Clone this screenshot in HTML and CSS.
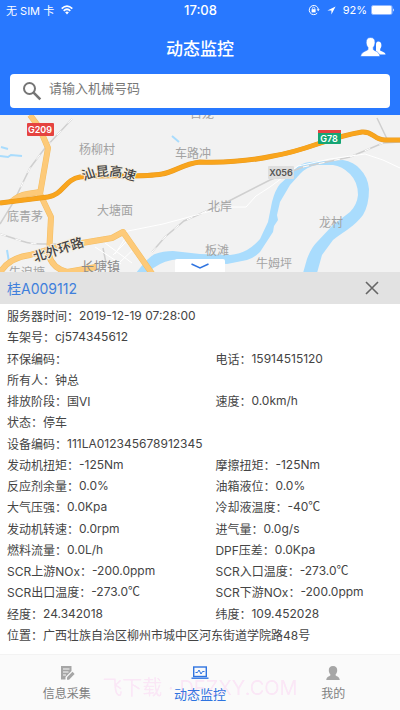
FILE: index.html
```html
<!DOCTYPE html>
<html lang="zh-CN">
<head>
    <meta charset="UTF-8">
    <meta name="viewport" content="width=device-width, initial-scale=1.0">
    <title>动态监控</title>
    <link rel="stylesheet" href="styles.css">
</head>
<body>
    <header class="header">
        <div class="status-bar">
            <div class="status-side">
                <span>无 SIM 卡</span>
                <svg width="12" height="10" viewBox="0 0 12 10" fill="none" stroke="#fff" stroke-width="1.7">
                    <path d="M0.7 3.6 Q6 -1.4 11.3 3.6"/>
                    <path d="M2.7 5.8 Q6 2.7 9.3 5.8"/>
                    <path d="M4.1 7.3 Q6 5.6 7.9 7.3 L6 9.4z" fill="#fff" stroke="none"/>
                </svg>
            </div>
            <span class="clock">17:08</span>
            <div class="status-side status-right">
                <svg width="12" height="12" viewBox="0 0 12 12" fill="none" stroke="#fff" stroke-width="1">
                    <path d="M9.2 9.2 A4.6 4.6 0 1 1 10.4 5.4"/>
                    <path d="M8.7 5.2 h3 l-1.5 2z" fill="#fff" stroke="none"/>
                    <rect x="3.6" y="5.2" width="4" height="3.2" fill="#fff" stroke="none"/>
                    <path d="M4.4 5.4 V4.4 a1.2 1.2 0 0 1 2.4 0 V5.4" stroke-width="0.8"/>
                </svg>
                <svg class="locate" width="9" height="9" viewBox="0 0 9 9"><path d="M8.6 0.4 L0.4 4.6 H4.4 V8.6z" fill="#fff"/></svg>
                <span>92%</span>
                <svg width="24" height="10" viewBox="0 0 24 10" fill="#fff">
                    <rect x="0.5" y="0.5" width="20.500" height="9" rx="1.5" fill="none" stroke="#a9c6ff" stroke-width="0.8"/>
                    <rect x="1" y="1" width="19.500" height="8" rx="1"/>
                    <path d="M22 3.2 q1.8 1.8 0 3.6z"/>
                </svg>
            </div>
        </div>
        <div class="title-bar">
            <h1>动态监控</h1>
            <button class="contacts" type="button" aria-label="联系人">
                <svg width="26" height="20" viewBox="0 0 26 20" fill="#fff">
                    <path d="M18.200 4.500 c2.200 0 3.300 1.500 3.200 3.700 c0 1.700-.5 2.700-1.200 3.600 v1.500 c0 1.100 5 1.300 5.400 4.300 H16 V8 c0-2.200.6-3.500 2.200-3.500z"/>
                    <path d="M10.600 0.500 c3 0 4.600 2 4.400 4.900 c0 2.200-.7 3.800-1.700 4.900 v2 c0 1.600 6 1.600 6.700 7.200 H0.600 c.5-5.400 7.400-5.600 7.400-7.200 v-2 C6.900 9.200 6.200 7.600 6.200 5.400 C6 2.500 7.600 .5 10.600 .5z" stroke="#2878ff" stroke-width="0.6"/>
                </svg>
            </button>
        </div>
        <form class="search">
            <svg width="20" height="20" viewBox="0 0 20 20" fill="none" stroke="#757575" stroke-width="2">
                <circle cx="7.5" cy="7.5" r="5.5"/>
                <path d="M11.6 11.6 L18.3 18.3" stroke-width="2.6"/>
            </svg>
            <input type="search" placeholder="请输入机械号码" aria-label="请输入机械号码">
        </form>
    </header>

    <main class="main">
        <section class="map-wrap">
            <svg class="map" viewBox="0 0 400 157" preserveAspectRatio="xMidYMid slice">
                <rect width="400" height="157" fill="#f2f2f2"/>

                <!-- rivers -->
                <path d="M0 41 L8 42 L11 40 L22 41 M1 32 L8 34 M172 21 L179 27 M7 135 L9 147" fill="none" stroke="#a9dcfd" stroke-width="2"/>
                <path d="M136 158 Q148 142 155 139 Q163 136 173 136 L200 139 L230 140 Q240 139 247 135 Q255 130 260 124 L268 107 L272 87 Q275 75 280 69 L290 60 L295 54 Q301 48 310 47 L343 45 Q354 47 360 54 Q368 62 369 74 Q369 90 363 100 Q357 108 347 115 Q338 121 333 125 L322 140 L317 158 H303 L307 144 Q311 133 317 127 L333 110 L350 97 Q357 90 358 80 Q358 67 350 59 Q342 51 333 50 L317 50 Q306 52 300 59 L290 70 L280 87 L277 100 L278 105 L274 111 L273 117 L260 137 Q254 143 247 145 L227 149 L200 147 Q185 143 172 145 Q157 148 148 158z" fill="#a9dcfd"/>

                <!-- railways -->
                <g fill="none" stroke="#cfcfcf" stroke-width="1.5">
                    <path d="M72 4 L45 33 L30 53 L13 88 L0 109"/>
                    <path d="M0 119 C18 124 24 129 42 129 H83"/>
                    <path d="M152 137 L165 122 L184 106 L227 87 L270 65 L303 52 L350 42 L383 28 L400 27"/>
                    <path d="M377 3 L388 26 M103 133 L106 148"/>
                </g>
                <g fill="none" stroke="#fff">
                    <path d="M72 4 L45 33 L30 53 L13 88 M0 119 C18 124 24 129 42 129 H83 M152 137 L165 122 L184 106 L227 87 M303 52 L350 42 L383 28" stroke-dasharray="6 10"/>
                    <path d="M123 117 L163 109 L200 99 L225 92 H246 L256 81 L270 72 L298 51 L330 44 L365 39 L383 45 L400 53"/>
                    <path d="M95 132 L121 149 M105 128 L132 148 M113 140 L127 126 M120 147 L137 131 M128 119 L115 139"/>
                </g>

                <!-- roads -->
                <g fill="none" stroke-linejoin="round">
                    <g stroke="#f3bd62" stroke-width="6">
                        <path d="M30 0 L39 12 L48 33 L40 79 L51 102 L49 140 Q52 153 67 157"/>
                        <path d="M11 87 Q19 80 27 79 L40 77"/>
                        <path d="M0 158 Q8 143 30 140 L50 134 L82 128 L112 123 L123 117 L153 160 M67 157 L96 152"/>
                    </g>
                    <g stroke="#fdca79" stroke-width="5">
                        <path d="M30 0 L39 12 L48 33 L40 79 L51 102 L49 140 Q52 153 67 157"/>
                        <path d="M11 87 Q19 80 27 79 L40 77"/>
                        <path d="M0 158 Q8 143 30 140 L50 134 L82 128 L112 123 L123 117 L153 160 M67 157 L96 152"/>
                    </g>
                    <path d="M0 88 L48 82 C63 80 65 64 80 62 C100 59 140 63 162 59 C175 57 182 49 200 47 C230 48 250 46 273 41 C310 35 325 23 362 17 C373 16 374 25 385 25 H400" stroke="#e89a20" stroke-width="5"/>
                    <path d="M0 88 L48 82 C63 80 65 64 80 62 C100 59 140 63 162 59 C175 57 182 49 200 47 C230 48 250 46 273 41 C310 35 325 23 362 17 C373 16 374 25 385 25 H400" stroke="#f9a51d" stroke-width="4"/>
                </g>

                <!-- place names -->
                <g class="place">
                    <text x="79" y="39">杨柳村</text>
                    <text x="175" y="43">车路冲</text>
                    <text x="190" y="3">古龙</text>
                    <text x="97" y="100">大塘面</text>
                    <text x="7" y="106">底青茅</text>
                    <text x="208" y="96">北岸</text>
                    <text x="319" y="112">龙村</text>
                    <text x="205" y="140">板滩</text>
                    <text x="256" y="153">牛姆坪</text>
                    <text x="9" y="162">牛浪塘</text>
                    <text class="town" x="81" y="156">长塘镇</text>
                </g>
                <g class="road-name">
                    <path id="road1" d="M84 66 C98 59 115 59 137 67" fill="none"/>
                    <path id="road2" d="M35 147 L85 131" fill="none"/>
                    <text><textPath href="#road1">汕昆高速</textPath></text>
                    <text><textPath href="#road2">北外环路</textPath></text>
                </g>

                <!-- road numbers -->
                <rect x="27" y="8" width="27" height="13" rx="1" fill="#e54340"/>
                <text class="badge" x="40" y="18">G209</text>
                <rect x="318" y="15" width="23" height="14" rx="1" fill="#16a574"/>
                <rect x="318" y="15" width="23" height="3" fill="#e54340"/>
                <text class="badge" x="329" y="27">G78</text>
                <rect x="268" y="51" width="26" height="13" rx="1" fill="#dedede"/>
                <text class="badge badge-dark" x="281" y="61">X056</text>
            </svg>
            <button class="handle" type="button" aria-label="收起">
                <svg width="18" height="6" viewBox="0 0 18 6" fill="none" stroke="#2f74e0" stroke-width="1.5"><path d="M0.5 1 L9 5 L17.5 1"/></svg>
            </button>
        </section>

        <section class="sheet">
            <div class="sheet-head">
                <h2>桂A009112</h2>
                <button class="close" type="button" aria-label="关闭">
                    <svg width="14" height="14" viewBox="0 0 14 14" stroke="#666" stroke-width="1.6"><path d="M1 1 L13 13 M13 1 L1 13"/></svg>
                </button>
            </div>
            <dl class="details">
                <div class="wide"><dt>服务器时间：</dt><dd>2019-12-19 07:28:00</dd></div>
                <div class="wide"><dt>车架号：</dt><dd>cj574345612</dd></div>
                <div><dt>环保编码：</dt><dd></dd></div>
                <div><dt>电话：</dt><dd>15914515120</dd></div>
                <div class="wide"><dt>所有人：</dt><dd>钟总</dd></div>
                <div><dt>排放阶段：</dt><dd>国VI</dd></div>
                <div><dt>速度：</dt><dd>0.0km/h</dd></div>
                <div class="wide"><dt>状态：</dt><dd>停车</dd></div>
                <div class="wide"><dt>设备编码：</dt><dd>111LA012345678912345</dd></div>
                <div><dt>发动机扭矩：</dt><dd>-125Nm</dd></div>
                <div><dt>摩擦扭矩：</dt><dd>-125Nm</dd></div>
                <div><dt>反应剂余量：</dt><dd>0.0%</dd></div>
                <div><dt>油箱液位：</dt><dd>0.0%</dd></div>
                <div><dt>大气压强：</dt><dd>0.0Kpa</dd></div>
                <div><dt>冷却液温度：</dt><dd>-40<span class="unit">℃</span></dd></div>
                <div><dt>发动机转速：</dt><dd>0.0rpm</dd></div>
                <div><dt>进气量：</dt><dd>0.0g/s</dd></div>
                <div><dt>燃料流量：</dt><dd>0.0L/h</dd></div>
                <div><dt>DPF压差：</dt><dd>0.0Kpa</dd></div>
                <div><dt>SCR上游NOx：</dt><dd>-200.0ppm</dd></div>
                <div><dt>SCR入口温度：</dt><dd>-273.0<span class="unit">℃</span></dd></div>
                <div><dt>SCR出口温度：</dt><dd>-273.0<span class="unit">℃</span></dd></div>
                <div><dt>SCR下游NOx：</dt><dd>-200.0ppm</dd></div>
                <div><dt>经度：</dt><dd>24.342018</dd></div>
                <div><dt>纬度：</dt><dd>109.452028</dd></div>
                <div class="wide"><dt>位置：</dt><dd>广西壮族自治区柳州市城中区河东街道学院路48号</dd></div>
            </dl>
        </section>
    </main>

    <nav class="tabs">
        <a class="tab" href="#collect">
            <svg width="16" height="16" viewBox="0 0 16 16">
                <path d="M2 1 H12.5 V6 L6.5 12 V14.5 H2z" fill="#a6a6a6"/>
                <path d="M4 4 H10.5 M4 7 H9.5 M4 10 H7" stroke="#fafafa"/>
                <path d="M8 14.8 V12.3 L13.5 6.8 L15.6 8.9 L10 14.8z" fill="#a6a6a6"/>
            </svg>
            <span>信息采集</span>
        </a>
        <a class="tab active" href="#monitor">
            <svg width="18" height="16" viewBox="0 0 18 16" fill="none" stroke="#2f74e0" stroke-width="1.4">
                <rect x="2.7" y="2" width="12.6" height="9.5"/>
                <path d="M0.5 13.2 H17.5"/>
                <path d="M4.5 7.5 H6.500 L8 5 L10 9 L11.5 6.5 H13.5" stroke-width="1"/>
            </svg>
            <span>动态监控</span>
        </a>
        <a class="tab" href="#mine">
            <svg width="16" height="16" viewBox="0 0 16 16" fill="#a6a6a6">
                <path d="M8 1 c2.8 0 4.3 1.7 4.2 4.3 c0 2-.8 3.4-1.6 4.2 v.8 c0 .9 3.800 .9 4.200 4.600 H1.200 c.4-3.700 4.200-3.700 4.200-4.600 v-.8 C4.600 8.700 3.800 7.300 3.800 5.300 C3.700 2.700 5.200 1 8 1z"/>
            </svg>
            <span>我的</span>
        </a>
        <div class="watermark">飞下载 · DFZXY.COM</div>
    </nav>
</body>
</html>
```
FILE: styles.css
```css
* {
    box-sizing: border-box;
}

body {
    margin: 0;
    min-height: 100vh;
    display: flex;
    flex-direction: column;
    background: #fff;
    color: #444;
    font-family: Inter, "Noto Sans CJK SC", sans-serif;
    font-size: 12px;
}

h1, h2, dl, dd {
    margin: 0;
}

button {
    display: flex;
    align-items: center;
    justify-content: center;
    padding: 0;
    border: none;
    background: none;
    cursor: pointer;
}

svg {
    display: block;
    flex-shrink: 0;
}

.header {
    background: #2878ff;
    color: #fff;
    padding-bottom: 7px;
}

.status-bar {
    display: flex;
    align-items: center;
    height: 20px;
    padding: 0 5px 0 6px;
    font-size: 11px;
}

.status-side {
    display: flex;
    flex: 1;
    align-items: center;
    gap: 7px;
}

.status-right {
    justify-content: flex-end;
    gap: 4px;
}

.locate {
    margin: 0 3px;
}

.clock {
    font-size: 13px;
    font-weight: 500;
}

.title-bar {
    display: grid;
    grid-template-columns: 1fr auto 1fr;
    align-items: center;
    height: 54px;
    padding: 0 14px;
}

.title-bar h1 {
    grid-column: 2;
    font-size: 17px;
    font-weight: 500;
}

.contacts {
    justify-self: end;
}

.search {
    display: flex;
    align-items: center;
    gap: 7px;
    height: 34px;
    margin: 0 10px;
    padding: 0 12px;
    border-radius: 4px;
    background: #fff;
}

.search input {
    flex: 1;
    min-width: 0;
    padding: 0 0 6px;
    border: none;
    outline: none;
    background: none;
    color: #333;
    font: inherit;
    font-size: 13px;
}

.search input::placeholder {
    color: #777;
}

.main {
    display: flex;
    flex: 1;
    flex-direction: column;
}

.map-wrap {
    position: relative;
    height: 157px;
}

.map {
    width: 100%;
    height: 100%;
}

.place {
    fill: #a3a3a3;
    font-size: 12px;
}

.place .town {
    fill: #8c8c8c;
    font-size: 13px;
}

.road-name {
    fill: #444;
    stroke: #f5eee0;
    stroke-width: 2px;
    paint-order: stroke;
    font-size: 13px;
    font-weight: 500;
}

.road-name path {
    stroke: none;
}

.badge {
    fill: #fff;
    font-size: 9px;
    font-weight: 600;
    text-anchor: middle;
}

.badge-dark {
    fill: #555;
}

.handle {
    position: absolute;
    bottom: 0;
    left: 50%;
    width: 50px;
    height: 13px;
    margin-left: -25px;
    border-radius: 2px 2px 0 0;
    background: #fff;
}

.sheet {
    display: flex;
    flex: 1;
    flex-direction: column;
}

.sheet-head {
    display: flex;
    align-items: center;
    justify-content: space-between;
    height: 32px;
    padding: 0 21px 0 7px;
    background: #e2e2e2;
}

.sheet-head h2 {
    color: #3f7fdc;
    font-size: 14px;
    font-weight: 400;
}

.details {
    display: grid;
    flex: 1;
    grid-template-columns: 54% 46%;
    grid-auto-rows: 1fr;
    padding: 1px 7px 9px;
}

.details div {
    display: flex;
    align-items: center;
    white-space: nowrap;
}

.details .wide {
    grid-column: 1 / -1;
}

.unit {
    font-family: "Noto Sans CJK SC", sans-serif;
    line-height: 1;
}

.tabs {
    position: relative;
    display: grid;
    grid-template-columns: repeat(3, 1fr);
    height: 56px;
    border-top: 1px solid #f3f3f3;
    background: #fafafa;
}

.tab {
    display: flex;
    flex-direction: column;
    align-items: center;
    justify-content: center;
    gap: 4px;
    padding-top: 3px;
    color: #808080;
    font-size: 12px;
    line-height: 18px;
    text-decoration: none;
}

.active {
    color: #2f74e0;
    font-size: 13px;
}

.watermark {
    position: absolute;
    right: 0;
    bottom: 8px;
    left: 0;
    color: rgba(255, 100, 220, 0.15);
    font-size: 20px;
    line-height: 28px;
    text-align: center;
    pointer-events: none;
}
```
